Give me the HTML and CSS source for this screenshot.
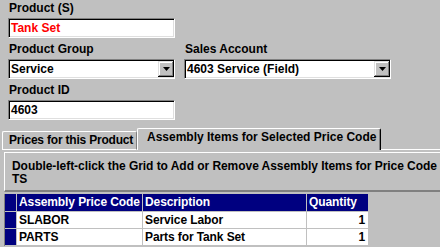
FILE: index.html
```html
<!DOCTYPE html>
<html>
  <head>
    <title>Product</title>
    <link rel="stylesheet" href="styles.css">
  </head>
  <body>
<div class="fields">
  <div class="field">
    <label>Product (S)</label>
    <div class="edit red">Tank Set</div>
  </div>
  <div class="row">
    <div class="field">
      <label>Product Group</label>
      <div class="edit combo"><span>Service</span><span class="drop"><svg width="7" height="4"><path d="M0 0h7L3.5 4z"/></svg></span></div>
    </div>
    <div class="field sales">
      <label>Sales Account</label>
      <div class="edit combo"><span>4603 Service (Field)</span><span class="drop"><svg width="7" height="4"><path d="M0 0h7L3.5 4z"/></svg></span></div>
    </div>
  </div>
  <div class="field">
    <label>Product ID</label>
    <div class="edit">4603</div>
  </div>
</div>

<div class="tabs">
  <div class="tab">Prices for this Product</div>
  <div class="tab active">Assembly Items for Selected Price Code</div>
  <div class="tab-fill"></div>
</div>

<div class="panel">
  <div class="hint">Double-left-click the Grid to Add or Remove Assembly Items for Price Code<br>TS</div>
  <table class="grid">
    <tr>
      <th class="ind"></th>
      <th class="c1">Assembly Price Code</th>
      <th class="c2">Description</th>
      <th class="c3">Quantity</th>
    </tr>
    <tr>
      <td class="ind"></td>
      <td>SLABOR</td>
      <td>Service Labor</td>
      <td class="num">1</td>
    </tr>
    <tr>
      <td class="ind"></td>
      <td>PARTS</td>
      <td>Parts for Tank Set</td>
      <td class="num">1</td>
    </tr>
  </table>
</div>
  </body>
</html>
```

FILE: styles.css
```css
body { margin: 0;
	background: #c0c0c0;
	color: #000;
	font: bold 12px "Liberation Sans", Arial, sans-serif;
	overflow: hidden;
	}

.fields { padding: 1px 0 4px 8px; }
.row { display: flex; gap: 9px; }

.field { width: 167px; margin-bottom: 4px; }
.field.sales { width: 207px; }
.field label { display: block; height: 15px; line-height: 15px; margin: 0 0 2px 1px; }

.edit {
	display: flex;
	align-items: center;
	height: 20px;
	box-sizing: border-box;
	padding-left: 2px;
	line-height: 18px;
	background: #fff;
	border: 1px solid;
	border-color: #808080 #fff #fff #808080;
	box-shadow: inset 1px 1px #000, inset -1px -1px #dfdfdf;
	}
.edit.red { color: #f00; }
.combo { justify-content: space-between; }

.drop {
	display: flex;
	align-items: center;
	justify-content: center;
	width: 16px;
	height: 16px;
	box-sizing: border-box;
	background: #c0c0c0;
	box-shadow: inset -1px -1px #000, inset 1px 1px #dfdfdf, inset -2px -2px #808080, inset 2px 2px #fff;
	}
.drop svg { display: block; }

.tabs { display: flex; align-items: flex-end; height: 22px; padding-left: 2px; }
.tab {
	box-sizing: border-box;
	height: 19px;
	width: 135px;
	padding-left: 6px;
	line-height: 17px;
	letter-spacing: -0.2px;
	white-space: nowrap;
	border-top: 1px solid #fff;
	border-left: 1px solid #fff;
	border-right: 1px solid #808080;
	border-bottom: 1px solid #fff;
	border-radius: 2px 2px 0 0;
	}
.tab.active {
	height: 22px;
	width: 244px;
	padding-left: 9px;
	letter-spacing: 0;
	border-bottom: none;
	border-right-color: #000;
	box-shadow: inset -1px 0 #808080;
	}
.tab-fill { flex: 1; height: 1px; background: #fff; }

.panel { padding: 2px 0 0 4px; }
.hint {
	padding: 7px 0 4px 7px;
	line-height: 13px;
	letter-spacing: -0.05px;
	white-space: nowrap;
	border-top: 1px solid #fff;
	border-left: 1px solid #fff;
	border-bottom: 2px solid #808080;
	}

.grid {
	margin-top: 2px;
	width: 365px;
	table-layout: fixed;
	border-collapse: separate;
	border-spacing: 0;
	border-left: 1px solid #808080;
	background: #fff;
	letter-spacing: -0.1px;
	}
.grid th, .grid td {
	box-sizing: border-box;
	padding: 0 3px 0 2px;
	text-align: left;
	white-space: nowrap;
	border-right: 1px solid #c0c0c0;
	border-bottom: 1px solid #c0c0c0;
	}
.grid th { height: 18px; line-height: 17px; background: #000080; color: #fff; }
.grid td { height: 17px; line-height: 16px; }
.grid .ind { width: 12px; background: #000080; }
.grid .c1 { width: 126px; }
.grid .c2 { width: 164px; }
.grid .c3 { width: 62px; }
.grid .num { text-align: right; }
```
